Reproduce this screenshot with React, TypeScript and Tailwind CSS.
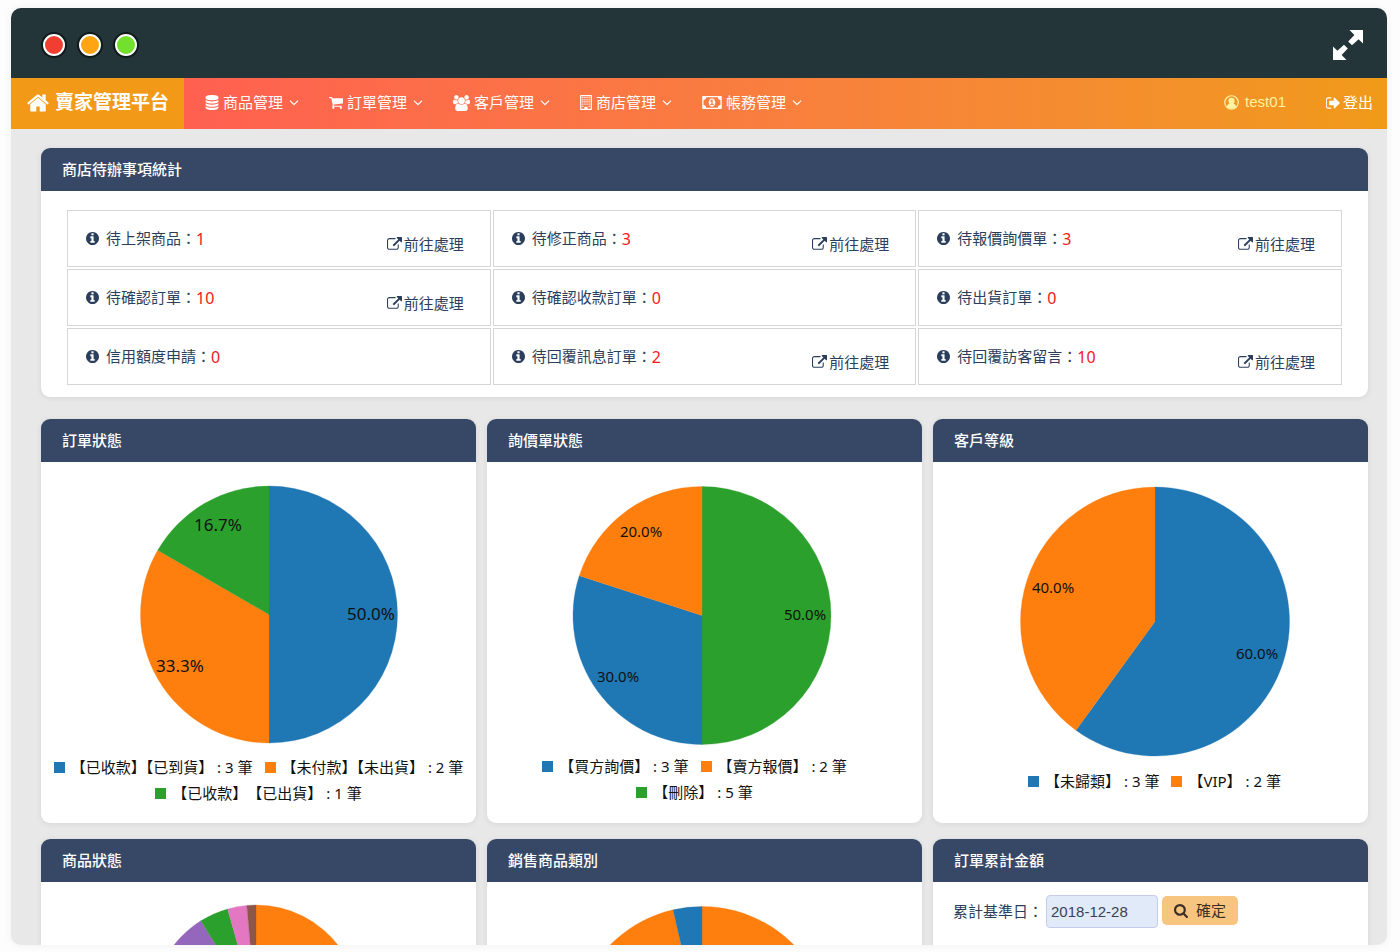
import type { ReactNode } from 'react';

type IconProps = { className?: string };

function Glyph({ d, box = '0 0 1792 1792', className }: IconProps & { d: string; box?: string }) {
  return (
    <svg viewBox={box} className={className} fill="currentColor" aria-hidden="true">
      <path d={d} />
    </svg>
  );
}

const paths = {
  home: 'M1472 992v480q0 26-19 45t-45 19h-384v-384h-256v384h-384q-26 0-45-19t-19-45v-480q0-1 .5-3t.5-3l575-474 575 474q1 2 1 6zm223-69l-62 74q-8 9-21 11h-3q-13 0-21-7l-692-577-692 577q-12 8-24 7-13-2-21-11l-62-74q-8-10-7-23.5t11-21.5l719-599q32-26 76-26t76 26l244 204v-195q0-14 9-23t23-9h192q14 0 23 9t9 23v408l219 182q10 8 11 21.5t-7 23.5z',
  database:
    'M896 768q237 0 443-43t325-127v170q0 69-103 128t-280 93.5-385 34.5-385-34.5-280-93.5-103-128v-170q119 84 325 127t443 43zm0 768q237 0 443-43t325-127v170q0 69-103 128t-280 93.5-385 34.5-385-34.5-280-93.5-103-128v-170q119 84 325 127t443 43zm0-384q237 0 443-43t325-127v170q0 69-103 128t-280 93.5-385 34.5-385-34.5-280-93.5-103-128v-170q119 84 325 127t443 43zm0-1152q208 0 385 34.5t280 93.5 103 128v128q0 69-103 128t-280 93.5-385 34.5-385-34.5-280-93.5-103-128v-128q0-69 103-128t280-93.5 385-34.5z',
  cart: 'M704 1536q0 52-38 90t-90 38-90-38-38-90 38-90 90-38 90 38 38 90zm896 0q0 52-38 90t-90 38-90-38-38-90 38-90 90-38 90 38 38 90zm128-1088v512q0 24-16.5 42.5t-40.5 21.5l-1044 122q13 60 13 70 0 16-24 64h920q26 0 45 19t19 45-19 45-45 19h-1024q-26 0-45-19t-19-45q0-11 8-31.5t16-36 21.5-40 15.5-29.5l-177-823h-204q-26 0-45-19t-19-45 19-45 45-19h256q16 0 28.5 6.5t19.5 15.5 13 24.5 8 26 5.5 29.5 4.5 26h1201q26 0 45 19t19 45z',
  users:
    'M529 896q-162 5-265 128h-134q-82 0-138-40.5t-56-118.5q0-353 124-353 6 0 43.5 21t97.5 42.5 119 21.5q67 0 133-23-5 37-5 66 0 139 81 256zm1071 637q0 120-73 189.5t-194 69.5h-874q-121 0-194-69.5t-73-189.5q0-53 3.5-103.5t14-109 26.5-108.5 43-97.5 62-81 85.5-53.5 111.5-20q10 0 43 21.5t73 48 107 48 135 21.5 135-21.5 107-48 73-48 43-21.5q61 0 111.5 20t85.5 53.5 62 81 43 97.5 26.5 108.5 14 109 3.5 103.5zm-1024-1277q0 106-75 181t-181 75-181-75-75-181 75-181 181-75 181 75 75 181zm704 384q0 159-112.5 271.5t-271.5 112.5-271.5-112.5-112.5-271.5 112.5-271.5 271.5-112.5 271.5 112.5 112.5 271.5zm576 225q0 78-56 118.5t-138 40.5h-134q-103-123-265-128 81-117 81-256 0-29-5-66 66 23 133 23 59 0 119-21.5t97.5-42.5 43.5-21q124 0 124 353zm-128-609q0 106-75 181t-181 75-181-75-75-181 75-181 181-75 181 75 75 181z',
  money:
    'M768 1152h384v-96h-128v-448h-114l-148 137 77 80q42-37 55-57h2v288h-128v96zm512-256q0 70-21 142t-59.5 134-101.5 101-138 39-138-39-101.5-101-59.5-134-21-142 21-142 59.5-134 101.5-101 138-39 138 39 101.5 101 59.5 134 21 142zm512 256v-512q-106 0-181-75t-75-181h-1152q0 106-75 181t-181 75v512q106 0 181 75t75 181h1152q0-106 75-181t181-75zm128-832v1152q0 26-19 45t-45 19h-1792q-26 0-45-19t-19-45v-1152q0-26 19-45t45-19h1792q26 0 45 19t19 45z',
  signOut:
    'M704 1440q0 4 1 20t.5 26.5-3 23.5-10 19.5-20.5 6.5h-320q-119 0-203.5-84.5t-84.5-203.5v-704q0-119 84.5-203.5t203.5-84.5h320q13 0 22.5 9.5t9.5 22.5q0 4 1 20t.5 26.5-3 23.5-10 19.5-20.5 6.5h-320q-66 0-113 47t-47 113v704q0 66 47 113t113 47h312l11.5 1 11.5 3 8 5.5 7 9 2 13.5zm928-544q0 26-19 45l-544 544q-19 19-45 19t-45-19-19-45v-288h-448q-26 0-45-19t-19-45v-384q0-26 19-45t45-19h448v-288q0-26 19-45t45-19 45 19l544 544q19 19 19 45z',
  info: 'M1152 1376v-160q0-14-9-23t-23-9h-96v-512q0-14-9-23t-23-9h-320q-14 0-23 9t-9 23v160q0 14 9 23t23 9h96v320h-96q-14 0-23 9t-9 23v160q0 14 9 23t23 9h448q14 0 23-9t9-23zm-128-896v-160q0-14-9-23t-23-9h-192q-14 0-23 9t-9 23v160q0 14 9 23t23 9h192q14 0 23-9t9-23zm640 416q0 209-103 385.5t-279.5 279.5-385.5 103-385.5-103-279.5-279.5-103-385.5 103-385.5 279.5-279.5 385.5-103 385.5 103 279.5 279.5 103 385.5z',
  external:
    'M1408 928v320q0 119-84.5 203.5t-203.5 84.5h-832q-119 0-203.5-84.5t-84.5-203.5v-832q0-119 84.5-203.5t203.5-84.5h704q14 0 23 9t9 23v64q0 14-9 23t-23 9h-704q-66 0-113 47t-47 113v832q0 66 47 113t113 47h832q66 0 113-47t47-113v-320q0-14 9-23t23-9h64q14 0 23 9t9 23zm384-864v512q0 26-19 45t-45 19-45-19l-176-176-652 652q-10 10-23 10t-23-10l-114-114q-10-10-10-23t10-23l652-652-176-176q-19-19-19-45t19-45 45-19h512q26 0 45 19t19 45z',
  search:
    'M1216 832q0-185-131.5-316.5t-316.5-131.5-316.5 131.5-131.5 316.5 131.5 316.5 316.5 131.5 316.5-131.5 131.5-316.5zm512 832q0 52-38 90t-90 38q-54 0-90-38l-343-342q-179 124-399 124-143 0-273.5-55.5t-225-150-150-225-55.5-273.5 55.5-273.5 150-225 225-150 273.5-55.5 273.5 55.5 225 150 150 225 55.5 273.5q0 220-124 399l343 343q37 37 37 90z',
  angleDown:
    'M1395 736q0 13-10 23l-466 466q-10 10-23 10t-23-10l-466-466q-10-10-10-23t10-23l50-50q10-10 23-10t23 10l393 393 393-393q10-10 23-10t23 10l50 50q10 10 10 23z',
};

function BuildingIcon({ className }: IconProps) {
  const cells: ReactNode[] = [];
  for (let row = 0; row < 5; row++) {
    for (let col = 0; col < 4; col++) {
      if (row === 4 && (col === 1 || col === 2)) continue;
      cells.push(<rect key={`${row}-${col}`} x={246 + col * 256} y={246 + row * 256} width="150" height="150" rx="24" />);
    }
  }
  return (
    <svg viewBox="0 0 1408 1792" className={className} fill="currentColor" aria-hidden="true">
      <path
        fillRule="evenodd"
        d="M64 0h1280q26 0 45 19t19 45v1664q0 26-19 45t-45 19H64q-26 0-45-19t-19-45V64q0-26 19-45t45-19zM144 144v1504h368v-208q0-32 32-32h320q32 0 32 32v208h368V144z"
      />
      {cells}
    </svg>
  );
}

function UserCircleIcon({ className }: IconProps) {
  return (
    <svg viewBox="0 0 16 16" className={className} aria-hidden="true">
      <circle cx="8" cy="8" r="7.2" fill="none" stroke="currentColor" strokeWidth="1.3" />
      <path
        fill="currentColor"
        d="M8 2.9a3.3 3.3 0 0 1 3.3 3.4c0 1.3-.5 2.3-1.2 2.9 1.7.3 2.7 1.5 2.9 3.2A6.5 6.5 0 0 1 8 14.6a6.5 6.5 0 0 1-5-2.2c.2-1.7 1.2-2.9 2.9-3.2-.7-.6-1.2-1.6-1.2-2.9A3.3 3.3 0 0 1 8 2.9z"
      />
    </svg>
  );
}

function ExpandIcon() {
  return (
    <svg viewBox="0 0 30 30" className="size-[30px]" fill="currentColor" aria-hidden="true">
      <polygon points="16.5,0 30,0 30,13.5 25.6,9.2 19,15.2 15.2,11.4 21.4,5" />
      <polygon points="13.5,30 0,30 0,16.5 4.4,20.8 11,14.8 14.8,18.6 8.6,25" />
    </svg>
  );
}

const menu: { label: string; icon: ReactNode }[] = [
  { label: '商品管理', icon: <Glyph d={paths.database} box="128 0 1536 1792" className="h-[15px] w-3.5" /> },
  { label: '訂單管理', icon: <Glyph d={paths.cart} box="64 128 1664 1664" className="size-3.5" /> },
  { label: '客戶管理', icon: <Glyph d={paths.users} box="-64 0 1920 1792" className="h-4 w-[17px]" /> },
  { label: '商店管理', icon: <BuildingIcon className="h-[15px] w-3" /> },
  { label: '帳務管理', icon: <Glyph d={paths.money} box="0 256 1920 1280" className="h-[13px] w-5" /> },
];

type Todo = { label: string; count: number; link?: boolean };

const todos: Todo[] = [
  { label: '待上架商品', count: 1, link: true },
  { label: '待修正商品', count: 3, link: true },
  { label: '待報價詢價單', count: 3, link: true },
  { label: '待確認訂單', count: 10, link: true },
  { label: '待確認收款訂單', count: 0 },
  { label: '待出貨訂單', count: 0 },
  { label: '信用額度申請', count: 0 },
  { label: '待回覆訊息訂單', count: 2, link: true },
  { label: '待回覆訪客留言', count: 10, link: true },
];

const BLUE = '#1f77b4';
const ORANGE = '#ff7f0e';
const GREEN = '#2ca02c';

type Slice = { share: number; color: string; text?: string; x?: number; y?: number };

function Pie({ cx, cy, r, height, slices, labelClass = 'text-[15px]' }: {
  cx: number;
  cy: number;
  r: number;
  height: number;
  slices: Slice[];
  labelClass?: string;
}) {
  let start = 0;
  const wedges = slices.map((slice) => {
    const from = start * 2 * Math.PI;
    start += slice.share;
    const to = start * 2 * Math.PI;
    const large = slice.share > 0.5 ? 1 : 0;
    return (
      <path
        key={`${slice.color}-${start}`}
        fill={slice.color}
        stroke={slice.color}
        strokeWidth="0.3"
        d={`M${cx} ${cy}L${cx + r * Math.sin(from)} ${cy - r * Math.cos(from)}A${r} ${r} 0 ${large} 1 ${cx + r * Math.sin(to)} ${cy - r * Math.cos(to)}Z`}
      />
    );
  });
  return (
    <svg width="435" height={height} viewBox={`0 0 435 ${height}`} className="max-w-full" role="img">
      {wedges}
      {slices.map((slice) =>
        slice.text ? (
          <text key={slice.text} x={slice.x} y={slice.y} textAnchor="middle" dominantBaseline="central" fill="#111" className={labelClass}>
            {slice.text}
          </text>
        ) : null,
      )}
    </svg>
  );
}

function LegendItem({ swatch, children }: { swatch: string; children: ReactNode }) {
  return (
    <li className="flex items-center gap-1.5 whitespace-nowrap">
      <span className={`size-[11px] ${swatch}`} />
      <span>{children}</span>
    </li>
  );
}

function Legend({ className = '', children }: { className?: string; children: ReactNode }) {
  return (
    <ul className={`flex flex-wrap justify-center gap-x-3 px-3 text-[15px] leading-[26px] text-[#111] ${className}`}>{children}</ul>
  );
}

function Card({ title, className = '', children }: { title: string; className?: string; children: ReactNode }) {
  return (
    <section className={`overflow-hidden rounded-[9px] bg-white shadow-[0_1px_6px_rgba(0,0,0,0.08)] ${className}`}>
      <h2 className="bg-[#374866] px-[21px] text-[15px] leading-[43px] font-medium text-white">{title}</h2>
      {children}
    </section>
  );
}

export default function App() {
  return (
    <div
      lang="zh-Hant"
      className="flex h-screen flex-col bg-[#fdfdfd] pt-2 pr-[13px] pb-[7px] pl-[11px] font-['Noto_Sans','Noto_Sans_CJK_TC',sans-serif] text-[15px] text-[#2b3f5c]"
    >
      <div className="flex min-h-0 flex-1 flex-col overflow-hidden rounded-[10px] bg-[#e8e8e8] shadow-[0_0_8px_rgba(0,0,0,0.06)]">
        <div className="flex h-[70px] shrink-0 items-center justify-between bg-[#243539] pt-[3px] pr-6 pl-8 text-white">
          <div className="flex gap-3.5">
            <button type="button" aria-label="關閉" className="size-[22px] rounded-full border-2 border-white bg-[#f03f30] ring-2 ring-[#10191c]" />
            <button type="button" aria-label="縮小" className="size-[22px] rounded-full border-2 border-white bg-[#ffa513] ring-2 ring-[#10191c]" />
            <button type="button" aria-label="放大" className="size-[22px] rounded-full border-2 border-white bg-[#72e02c] ring-2 ring-[#10191c]" />
          </div>
          <button type="button" aria-label="全螢幕">
            <ExpandIcon />
          </button>
        </div>

        <header className="flex h-[51px] shrink-0 bg-linear-to-r from-[#ff6050] from-13% to-[#f09a18] text-white">
          <a href="#home" className="flex w-[173px] items-center gap-[5px] bg-[#f29a18] pb-0.5 pl-[15px] text-[19px] font-bold whitespace-nowrap">
            <Glyph d={paths.home} className="size-6" />
            賣家管理平台
          </a>
          <nav className="flex items-center gap-[30px] pb-0.5 pl-[21px]">
            {menu.map(({ label, icon }) => (
              <button key={label} type="button" className="flex items-center gap-1 whitespace-nowrap">
                {icon}
                {label}
                <Glyph d={paths.angleDown} box="320 512 1152 896" className="ml-0.5 h-2 w-[10px]" />
              </button>
            ))}
          </nav>
          <div className="ml-auto flex items-center gap-10 pr-3.5 pb-0.5 whitespace-nowrap">
            <a href="#account" className="flex items-center gap-1.5 font-['Liberation_Sans',sans-serif] text-[#fff2a0]">
              <UserCircleIcon className="size-[15px]" />
              test01
            </a>
            <a href="#logout" className="flex items-center gap-[3px]">
              <Glyph d={paths.signOut} box="96 224 1568 1344" className="h-3 w-3.5" />
              登出
            </a>
          </div>
        </header>

        <main className="min-h-0 flex-1 overflow-hidden pt-[19px] pr-[19px] pl-[30px]">
          <Card title="商店待辦事項統計">
            <ul className="grid grid-cols-3 gap-0.5 px-[26px] pt-[19px] pb-3">
              {todos.map(({ label, count, link }) => (
                <li key={label} className="flex h-[57px] items-center justify-between border border-[#d6d6d6] pr-[26px] pl-[18px] whitespace-nowrap">
                  <span className="flex items-center">
                    <Glyph d={paths.info} box="128 128 1536 1536" className="mr-[7px] size-[13px]" />
                    {label}：<span className="text-base text-[#f01818]">{count}</span>
                  </span>
                  {link && (
                    <a href="#todo" className="flex items-center gap-0.5 pt-3">
                      <Glyph d={paths.external} className="size-[15px]" />
                      前往處理
                    </a>
                  )}
                </li>
              ))}
            </ul>
          </Card>

          <div className="mt-[22px] grid grid-cols-3 gap-x-[11px] gap-y-4">
            <Card title="訂單狀態" className="min-h-[404px]">
              <Pie
                cx={228}
                cy={152.5}
                r={128.5}
                height={292}
                labelClass="text-[17px]"
                slices={[
                  { share: 1 / 2, color: BLUE, text: '50.0%', x: 330, y: 151 },
                  { share: 1 / 3, color: ORANGE, text: '33.3%', x: 139, y: 203 },
                  { share: 1 / 6, color: GREEN, text: '16.7%', x: 177, y: 62 },
                ]}
              />
              <Legend>
                <LegendItem swatch="bg-[#1f77b4]">【已收款】【已到貨】 : 3 筆</LegendItem>
                <LegendItem swatch="bg-[#ff7f0e]">【未付款】【未出貨】 : 2 筆</LegendItem>
                <LegendItem swatch="bg-[#2ca02c]">
                  <span className="[text-spacing-trim:space-all]">【已收款】【已出貨】 : 1 筆</span>
                </LegendItem>
              </Legend>
            </Card>

            <Card title="詢價單狀態" className="min-h-[404px]">
              <Pie
                cx={215}
                cy={153.5}
                r={129}
                height={291}
                slices={[
                  { share: 0.5, color: GREEN, text: '50.0%', x: 318, y: 152 },
                  { share: 0.3, color: BLUE, text: '30.0%', x: 131, y: 214 },
                  { share: 0.2, color: ORANGE, text: '20.0%', x: 154, y: 69 },
                ]}
              />
              <Legend className="pr-8">
                <LegendItem swatch="bg-[#1f77b4]">【買方詢價】 : 3 筆</LegendItem>
                <LegendItem swatch="bg-[#ff7f0e]">【賣方報價】 : 2 筆</LegendItem>
                <LegendItem swatch="bg-[#2ca02c]">【刪除】 : 5 筆</LegendItem>
              </Legend>
            </Card>

            <Card title="客戶等級" className="min-h-[404px]">
              <Pie
                cx={222}
                cy={159.5}
                r={134.5}
                height={306}
                slices={[
                  { share: 0.6, color: BLUE, text: '60.0%', x: 324, y: 191 },
                  { share: 0.4, color: ORANGE, text: '40.0%', x: 120, y: 125 },
                ]}
              />
              <Legend className="pl-5">
                <LegendItem swatch="bg-[#1f77b4]">【未歸類】 : 3 筆</LegendItem>
                <LegendItem swatch="bg-[#ff7f0e]">【VIP】 : 2 筆</LegendItem>
              </Legend>
            </Card>

            <Card title="商品狀態" className="min-h-[404px]">
              <Pie
                cx={215}
                cy={127}
                r={104}
                height={291}
                slices={[
                  { share: 0.6, color: ORANGE },
                  { share: 0.311, color: '#9467bd' },
                  { share: 0.045, color: GREEN },
                  { share: 0.03, color: '#e377c2' },
                  { share: 0.014, color: '#8c564b' },
                ]}
              />
            </Card>

            <Card title="銷售商品類別" className="min-h-[404px]">
              <Pie
                cx={215}
                cy={153.5}
                r={129}
                height={291}
                slices={[
                  { share: 0.964, color: ORANGE },
                  { share: 0.036, color: BLUE },
                ]}
              />
            </Card>

            <Card title="訂單累計金額" className="min-h-[404px]">
              <form className="flex items-start pt-[13px] pl-5">
                <label htmlFor="base-date" className="leading-[32px]">
                  累計基準日：
                </label>
                <input
                  id="base-date"
                  type="text"
                  defaultValue="2018-12-28"
                  className="ml-[3px] h-[33px] w-[112px] rounded-sm border border-[#c6cbee] bg-[#e0eaf8] px-1 font-['Liberation_Sans',sans-serif] text-[15px] text-[#3a4250]"
                />
                <button
                  type="button"
                  className="mt-px ml-1 flex h-[29px] w-[76px] items-center justify-center gap-2 rounded-[5px] bg-[#f7c57f] text-[#3a2f25]"
                >
                  <Glyph d={paths.search} box="64 128 1664 1664" className="size-3.5" />
                  確定
                </button>
              </form>
            </Card>
          </div>
        </main>
      </div>
    </div>
  );
}
